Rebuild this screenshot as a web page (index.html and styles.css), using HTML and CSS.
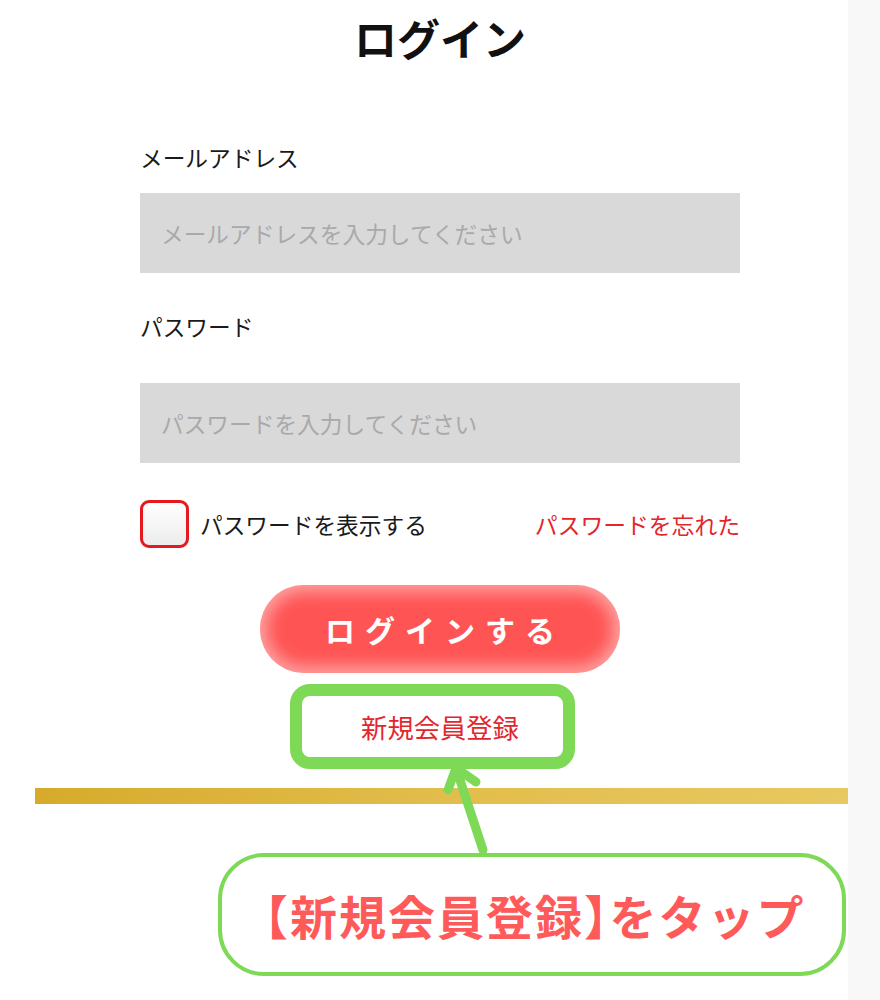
FILE: index.html
```html
<!DOCTYPE html>
<html lang="ja">
<head>
<meta charset="utf-8">
<title>ログイン</title>
<link rel="stylesheet" href="styles.css">
</head>
<body>
<div class="page">
  <div class="content">
    <h1 class="title">ログイン</h1>
    <div class="label label-email">メールアドレス</div>
    <div class="input">メールアドレスを入力してください</div>
    <div class="label label-pass">パスワード</div>
    <div class="input input-pass">パスワードを入力してください</div>
    <div class="options">
      <label class="show">
        <span class="checkbox"></span>
        <span class="show-text">パスワードを表示する</span>
      </label>
      <span class="forgot">パスワードを忘れた</span>
    </div>
    <div class="btn-row">
      <div class="login-btn">ログインする</div>
    </div>
    <div class="highlight">
      <span class="register">新規会員登録</span>
    </div>
  </div>
  <div class="gold-bar"></div>
  <div class="callout"><span class="br">【</span>新規会員登録<span class="br">】</span>をタップ</div>
  <svg class="arrow" width="60" height="100" viewBox="0 0 60 100">
    <g fill="none" stroke="#7ed957" stroke-width="9" stroke-linecap="round" stroke-linejoin="round">
      <line x1="43" y1="88" x2="16" y2="6"/>
      <polyline points="8,28 16,6 36,20"/>
    </g>
  </svg>
</div>
</body>
</html>
```
FILE: styles.css
```css
html, body {
  margin: 0;
  padding: 0;
}
body {
  background: #f8f8f8;
  font-family: "Noto Sans CJK JP", "Noto Sans", sans-serif;
}
.page {
  position: relative;
  width: 848px;
  height: 1000px;
  background: #fff;
  overflow: hidden;
}
.content {
  margin-left: 140px;
  width: 600px;
}
.title {
  margin: 0;
  font-size: 43px;
  font-weight: 700;
  line-height: 74px;
  text-align: center;
  color: #111;
}
.label {
  font-size: 22.7px;
  line-height: 30px;
  color: #1a1a1a;
}
.label-email {
  margin-top: 69px;
}
.label-pass {
  margin-top: 39px;
}
.input {
  margin-top: 20px;
  height: 80px;
  background: #d9d9d9;
  box-sizing: border-box;
  padding-left: 21px;
  display: flex;
  align-items: center;
  font-size: 22.7px;
  color: #a9a9a9;
}
.input-pass {
  margin-top: 41px;
}
.options {
  margin-top: 37px;
  height: 48px;
  display: flex;
  align-items: center;
  justify-content: space-between;
}
.show {
  display: flex;
  align-items: center;
}
.checkbox {
  width: 49px;
  height: 48px;
  box-sizing: border-box;
  border: 3px solid #e5191e;
  border-radius: 9px;
  background: linear-gradient(#ffffff, #ececec);
}
.show-text {
  margin-left: 11px;
  font-size: 22.7px;
  color: #1a1a1a;
}
.forgot {
  font-size: 22.8px;
  color: #e3262b;
}
.btn-row {
  margin-top: 37px;
  display: flex;
  justify-content: center;
}
.login-btn {
  width: 360px;
  height: 88px;
  border-radius: 44px;
  background: #ff5454;
  box-shadow: inset 0 0 16px 7px rgba(255, 255, 255, 0.45);
  color: #fff;
  font-size: 30px;
  font-weight: 700;
  letter-spacing: 10px;
  text-indent: 10px;
  display: flex;
  align-items: center;
  justify-content: center;
}
.highlight {
  margin-top: 11px;
  margin-left: 150px;
  width: 285px;
  height: 85px;
  box-sizing: border-box;
  border: 12px solid #7ed957;
  border-radius: 20px;
  display: flex;
  align-items: center;
  justify-content: center;
  padding-left: 15px;
}
.register {
  font-size: 26.3px;
  color: #e3262b;
}
.gold-bar {
  margin-top: 19px;
  margin-left: 35px;
  height: 16px;
  background: linear-gradient(90deg, #d6ab2c, #e2bd4c 50%, #e8c860);
}
.callout {
  margin-top: 49px;
  margin-left: 218px;
  width: 628px;
  height: 123px;
  box-sizing: border-box;
  border: 4px solid #7ed957;
  border-radius: 46px;
  display: flex;
  align-items: center;
  justify-content: center;
  padding-left: 6px;
  font-size: 47px;
  font-weight: 700;
  letter-spacing: 2px;
  color: #ff5a5a;
}
.br {
  font-feature-settings: "halt";
}
.arrow {
  position: absolute;
  left: 440px;
  top: 762px;
}
```
